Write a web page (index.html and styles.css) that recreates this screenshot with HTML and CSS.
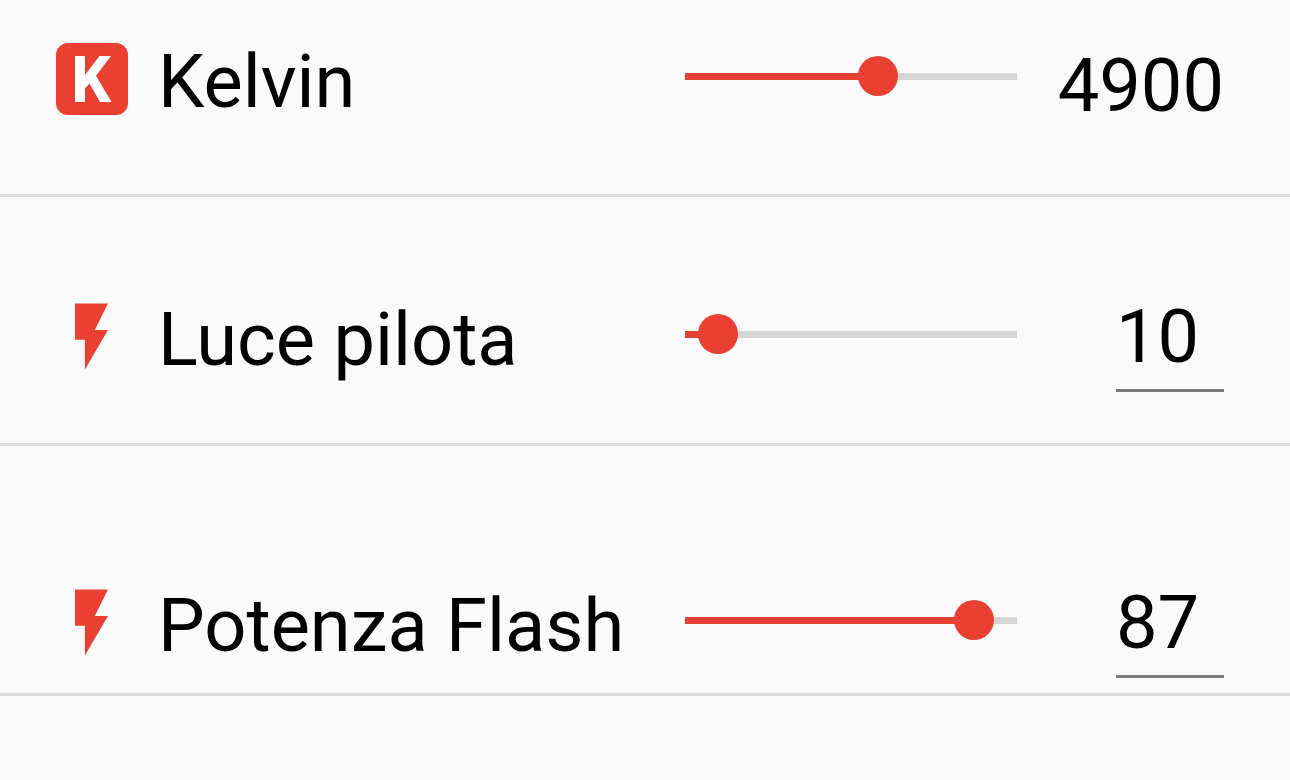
FILE: index.html
```html
<!DOCTYPE html>
<html lang="it">
<head>
  <meta charset="utf-8">
  <meta name="viewport" content="width=device-width, initial-scale=1">
  <title>Kelvin</title>

  <link rel="stylesheet" href="styles.css">

</head>

<body>
  <main class="settings">

    <div class="row kelvin-row">
      <svg class="icon" viewBox="0 0 79 79" aria-hidden="true">
        <rect x="4" y="4" width="72" height="72" rx="12" fill="#e94032"/>
        <path d="M23 17h10v19l14.500-19h11.500l-15 19.700 15.500 26.300h-11.500l-10.500-18.500-4.500 5v13.500h-10z" fill="#fff"/>
      </svg>
      <label class="name" for="kelvin">Kelvin</label>
      <input class="slider" id="kelvin" type="range" min="2000" max="7000" step="100" value="4900">
      <output class="value" for="kelvin">4900</output>
    </div>

    <div class="row pilot-row">
      <svg class="icon" viewBox="0 0 24 24" aria-hidden="true">
        <path d="M7 2v11h3v9l7-12h-4l4-8z" fill="#e94032"/>
      </svg>
      <label class="name" for="pilot">Luce pilota</label>
      <input class="slider" id="pilot" type="range" min="0" max="100" value="10">
      <input class="value value-edit" type="text" inputmode="numeric" value="10" aria-label="Luce pilota">
    </div>

    <div class="row flash-row">
      <svg class="icon" viewBox="0 0 24 24" aria-hidden="true">
        <path d="M7 2v11h3v9l7-12h-4l4-8z" fill="#e94032"/>
      </svg>
      <label class="name" for="flash">Potenza Flash</label>
      <input class="slider" id="flash" type="range" min="0" max="100" value="87">
      <input class="value value-edit" type="text" inputmode="numeric" value="87" aria-label="Potenza Flash">
    </div>

  </main>

  <script>

    // colours the part of the track before the thumb
    function fillTrack(slider)
    {
      const fill = (slider.value - slider.min) / (slider.max - slider.min);
      slider.style.setProperty("--fill", fill);
    }

    document.querySelectorAll(".row").forEach((row)=>
    {
      const slider = row.querySelector(".slider");
      const value = row.querySelector(".value");

      fillTrack(slider);

      slider.addEventListener("input", ()=>
      {
        value.value = slider.value;
        fillTrack(slider);
      });

      value.addEventListener("change", ()=>
      {
        slider.value = value.value;
        value.value = slider.value;
        fillTrack(slider);
      });
    });

  </script>

</body>
</html>
```
FILE: styles.css
```css
body
{
  margin:0;
  background-color:#fafafa;
  color:#000;
  font-family:Roboto, sans-serif;
  font-size:74px;
}

.row
{
  display:grid;
  grid-template-columns:82px 50fr 33fr 183px;
  column-gap:24px;
  align-items:start;
  padding-left:52px;
  padding-right:66px;
  border-bottom:3px solid #dcdcdc;
}

.kelvin-row
{
  padding-top:39px;
  padding-bottom:61px;
}

.pilot-row
{
  padding-top:100px;
  padding-bottom:51px;
}

.flash-row
{
  padding-top:137px;
  padding-bottom:15px;
}

.icon
{
  display:block;
  width:79px;
  height:79px;
}

.name
{
  line-height:86px;
  white-space:nowrap;
}

/* the thumb hangs over both ends of the track by half its width */
.slider
{
  -webkit-appearance:none;
  appearance:none;
  width:calc(100% + 40px);
  height:74px;
  margin:0 -20px;
  cursor:pointer;
  background:
    linear-gradient(#e24033, #e24033) 20px center / calc((100% - 40px) * var(--fill, 0)) 7px no-repeat,
    linear-gradient(#d6d6d6, #d6d6d6) 20px center / calc(100% - 40px) 7px no-repeat;
}

.slider::-webkit-slider-thumb
{
  -webkit-appearance:none;
  width:40px;
  height:40px;
  border-radius:50%;
  background-color:#e94032;
}

.slider::-moz-range-thumb
{
  width:40px;
  height:40px;
  border:none;
  border-radius:50%;
  background-color:#e94032;
}

.value
{
  justify-self:end;
  line-height:94px;
}

.value-edit
{
  box-sizing:border-box;
  width:108px;
  height:95px;
  padding:0 0 14px;
  border:none;
  border-bottom:3px solid #7a7a7a;
  border-radius:0;
  background:none;
  color:inherit;
  font:inherit;
  line-height:78px;
  outline:none;
}
```
